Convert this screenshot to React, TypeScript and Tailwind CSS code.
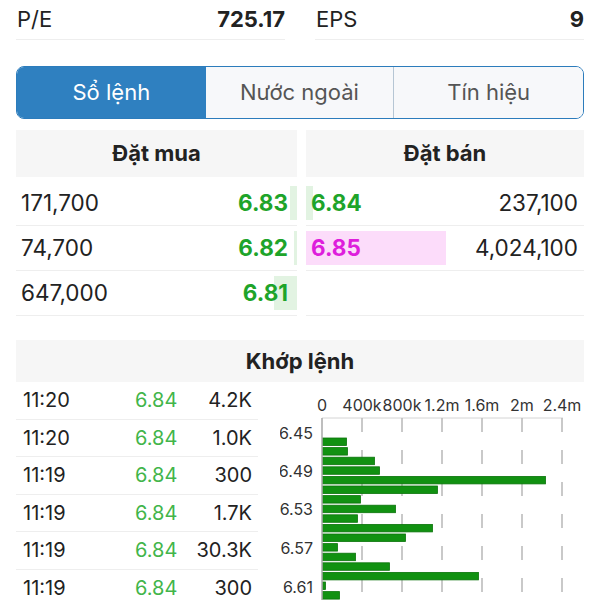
const buys = [
  { vol: "171,700", price: "6.83", bar: 7 },
  { vol: "74,700", price: "6.82", bar: 3 },
  { vol: "647,000", price: "6.81", bar: 23 },
];

const sells = [
  { vol: "237,100", price: "6.84", bar: 7, pink: false },
  { vol: "4,024,100", price: "6.85", bar: 140, pink: true },
];

const trades = [
  { time: "11:20", price: "6.84", vol: "4.2K" },
  { time: "11:20", price: "6.84", vol: "1.0K" },
  { time: "11:19", price: "6.84", vol: "300" },
  { time: "11:19", price: "6.84", vol: "1.7K" },
  { time: "11:19", price: "6.84", vol: "30.3K" },
  { time: "11:19", price: "6.84", vol: "300" },
];

const barWidths = [24, 25, 52, 57, 223, 115, 38, 73, 35, 110, 83, 15, 33, 67, 156, 3, 17];
const ticks = ["0", "400k", "800k", "1.2m", "1.6m", "2m", "2.4m"];
const yLabels = [
  { label: "6.45", y: 51 },
  { label: "6.49", y: 89 },
  { label: "6.53", y: 127 },
  { label: "6.57", y: 166 },
  { label: "6.61", y: 205 },
];

function VolumeChart() {
  return (
    <svg width="304" height="218" viewBox="0 0 304 218" className="block">
      {ticks.map((t, i) => (
        <text
          key={t}
          x={42 + i * 40}
          y={23}
          textAnchor="middle"
          dominantBaseline="central"
          fontSize="16"
          fill="#333"
          fontFamily="Inter, sans-serif"
        >
          {t}
        </text>
      ))}
      <line x1="42" y1="36" x2="283" y2="36" stroke="#d4d4d4" strokeWidth="1" />
      {ticks.slice(1).map((t, i) => (
        <line
          key={t}
          x1={82 + i * 40}
          y1="36"
          x2={82 + i * 40}
          y2="218"
          stroke="#b8b8b8"
          strokeWidth="1.5"
          strokeDasharray="14 18"
        />
      ))}
      {yLabels.map((l) => (
        <text
          key={l.label}
          x="33"
          y={l.y}
          textAnchor="end"
          dominantBaseline="central"
          fontSize="16"
          fill="#333"
          fontFamily="Inter, sans-serif"
        >
          {l.label}
        </text>
      ))}
      {barWidths.map((w, i) => (
        <rect
          key={i}
          x="42.5"
          y={56 + i * 9.6}
          width={w}
          height="7.5"
          fill="#119111"
          stroke="#0b740b"
          strokeWidth="0.8"
        />
      ))}
      <line x1="42" y1="36" x2="42" y2="218" stroke="#a8a8a8" strokeWidth="1.5" />
    </svg>
  );
}

export default function App() {
  return (
    <div className="w-[600px] h-[600px] overflow-hidden bg-white px-4 font-['Inter',sans-serif] text-[#222]">
      {/* chỉ số */}
      <div className="flex gap-[30px]">
        <div className="flex-1 h-[40px] flex items-center justify-between border-b border-[#eeeeee] text-[22px]">
          <span className="pl-[1px]">P/E</span>
          <span className="font-bold">725.17</span>
        </div>
        <div className="flex-1 h-[40px] flex items-center justify-between border-b border-[#eeeeee] text-[22px]">
          <span className="pl-[1px]">EPS</span>
          <span className="font-bold">9</span>
        </div>
      </div>

      {/* tabs */}
      <div className="mt-[26px] h-[53px] rounded-lg border border-[#2c7cbc] grid grid-cols-3 overflow-hidden text-[22px]">
        <div className="bg-[#2f80c0] text-white flex items-center justify-center">Sổ lệnh</div>
        <div className="bg-[#f7f8fa] text-[#555] flex items-center justify-center border-r border-[#b6c6d4]">Nước ngoài</div>
        <div className="bg-[#f7f8fa] text-[#555] flex items-center justify-center">Tín hiệu</div>
      </div>

      {/* sổ lệnh */}
      <div className="mt-[11px] flex gap-[9px]">
        <div className="w-[281px]">
          <div className="h-[47px] bg-[#f6f6f6] flex items-center justify-center text-[22px] font-bold">Đặt mua</div>
          <div className="mt-[4px]">
            {buys.map((b) => (
              <div key={b.price} className="relative h-[45px] border-b border-[#eeeeee] flex items-center justify-between pl-[5px] pr-[9px] text-[22.5px]">
                <div className="absolute right-0 top-[5px] bottom-[5px] bg-[#e2f3e2]" style={{ width: b.bar }} />
                <span className="relative">{b.vol}</span>
                <span className="relative font-bold text-[#1ea42a]">{b.price}</span>
              </div>
            ))}
          </div>
        </div>
        <div className="flex-1">
          <div className="h-[47px] bg-[#f6f6f6] flex items-center justify-center text-[22px] font-bold">Đặt bán</div>
          <div className="mt-[4px]">
            {sells.map((s) => (
              <div key={s.price} className="relative h-[45px] border-b border-[#eeeeee] flex items-center justify-between pl-[5px] pr-[6px] text-[22.5px]">
                <div
                  className={`absolute left-0 top-[5px] bottom-[5px] ${s.pink ? "bg-[#fcdcfa]" : "bg-[#e2f3e2]"}`}
                  style={{ width: s.bar }}
                />
                <span className={`relative font-bold ${s.pink ? "text-[#de1edc]" : "text-[#1ea42a]"}`}>{s.price}</span>
                <span className="relative">{s.vol}</span>
              </div>
            ))}
            <div className="h-[45px] border-b border-[#eeeeee]" />
          </div>
        </div>
      </div>

      {/* khớp lệnh */}
      <div className="mt-[24px] h-[42px] bg-[#f6f6f6] flex items-center justify-center text-[22px] font-bold">Khớp lệnh</div>
      <div className="flex">
        <div className="w-[242px]">
          {trades.map((t, i) => (
            <div key={i} className="h-[37.5px] border-b border-[#eeeeee] flex items-center pl-[7px] pr-[6px] text-[20px]">
              <span className="w-[112px]">{t.time}</span>
              <span className="text-[#42b54a]">{t.price}</span>
              <span className="ml-auto">{t.vol}</span>
            </div>
          ))}
        </div>
        <div className="ml-[22px]">
          <VolumeChart />
        </div>
      </div>
    </div>
  );
}
